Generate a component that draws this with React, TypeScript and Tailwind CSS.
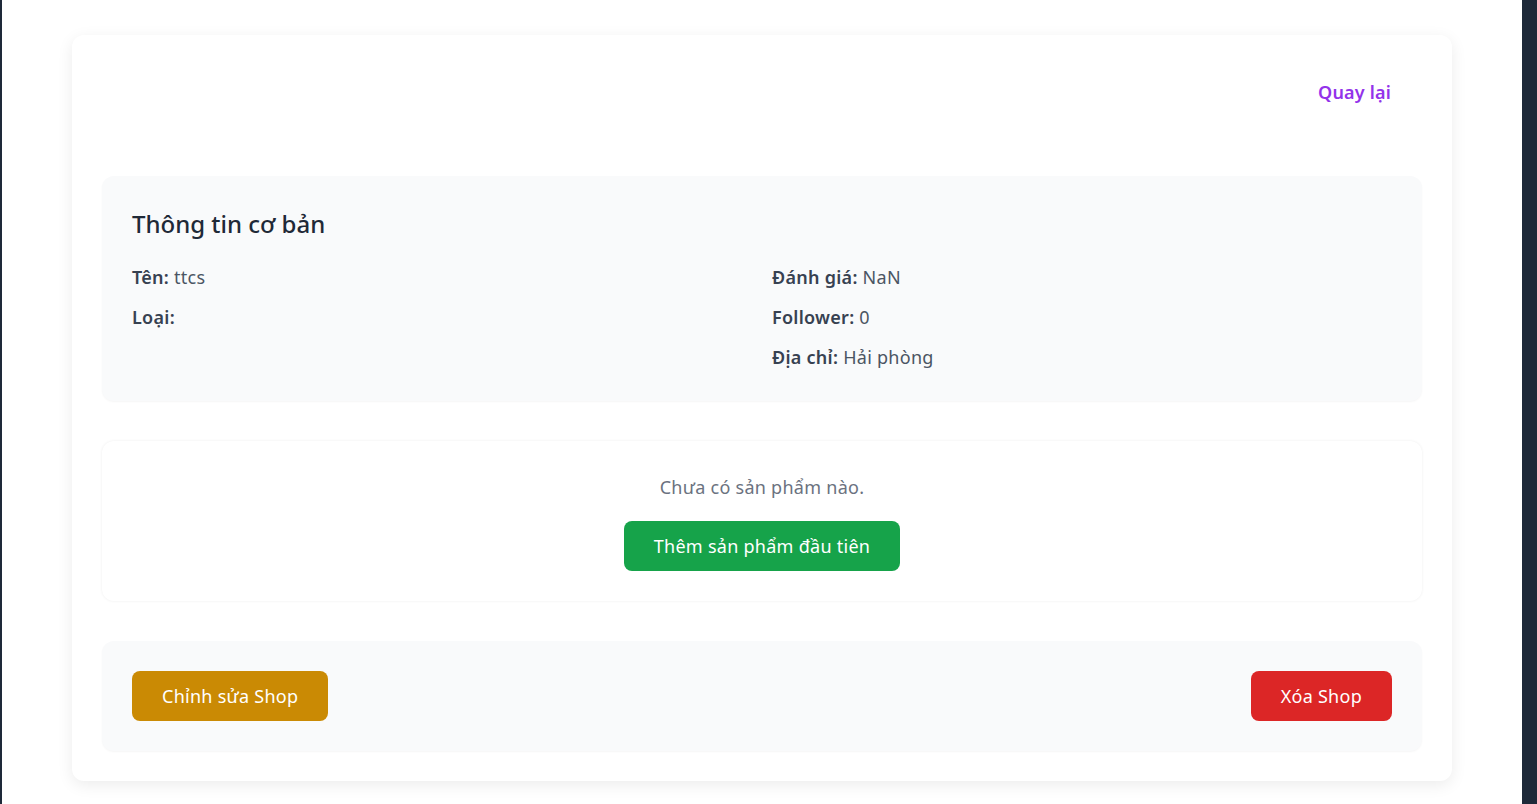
import React from "react";

export default function App() {
  return (
    <div
      className="flex min-h-[804px] w-full bg-white"
      style={{ fontFamily: '"Noto Sans", "Open Sans", sans-serif' }}
    >
      <div className="w-[2px] shrink-0 bg-[#1e2939]" />
      <div className="flex-1 px-[70px] pt-[35px] pb-[24px]">
        <div className="rounded-xl bg-white p-[30px] shadow-[0_4px_16px_rgba(0,0,0,0.08)]">
          <div className="flex h-[54px] items-center justify-end pr-[31px]">
            <button className="text-lg font-semibold tracking-[0.01em] text-[#9333ea]">Quay lại</button>
          </div>

          <div className="mt-[57px] rounded-xl bg-[#f9fafb] p-[30px] shadow-[0_1px_2px_rgba(0,0,0,0.04)]">
            <h2 className="mb-[23px] pt-[2px] text-2xl leading-8 font-medium text-[#1f2937]">Thông tin cơ bản</h2>
            <div className="grid grid-cols-2 gap-x-5 text-lg leading-7 tracking-[0.015em]">
              <div className="flex flex-col gap-3">
                <p className="text-[#4b5563]">
                  <span className="font-semibold text-[#374151]">Tên:</span> ttcs
                </p>
                <p className="text-[#4b5563]">
                  <span className="font-semibold text-[#374151]">Loại:</span>
                </p>
              </div>
              <div className="flex flex-col gap-3">
                <p className="text-[#4b5563]">
                  <span className="font-semibold text-[#374151]">Đánh giá:</span> NaN
                </p>
                <p className="text-[#4b5563]">
                  <span className="font-semibold text-[#374151]">Follower:</span> 0
                </p>
                <p className="text-[#4b5563]">
                  <span className="font-semibold text-[#374151]">Địa chỉ:</span> Hải phòng
                </p>
              </div>
            </div>
          </div>

          <div className="mt-10 flex flex-col items-center rounded-xl bg-white px-[30px] pt-[32px] pb-[30px] shadow-[0_0_3px_rgba(0,0,0,0.07)]">
            <p className="text-lg leading-7 tracking-[0.015em] text-[#6b7280]">Chưa có sản phẩm nào.</p>
            <button className="mt-5 rounded-lg bg-[#16a34a] px-[30px] py-[11px] text-lg leading-7 tracking-[0.015em] text-white">
              Thêm sản phẩm đầu tiên
            </button>
          </div>

          <div className="mt-10 flex items-center justify-between rounded-xl bg-[#f9fafb] p-[30px] shadow-[0_1px_2px_rgba(0,0,0,0.04)]">
            <button className="rounded-lg bg-[#ca8a04] px-[30px] py-[11px] text-lg leading-7 tracking-[0.015em] text-white">
              Chỉnh sửa Shop
            </button>
            <button className="rounded-lg bg-[#dc2626] px-[30px] py-[11px] text-lg leading-7 tracking-[0.015em] text-white">
              Xóa Shop
            </button>
          </div>
        </div>
      </div>
      <div className="w-[15px] shrink-0 bg-[#1e2939]" />
    </div>
  );
}
